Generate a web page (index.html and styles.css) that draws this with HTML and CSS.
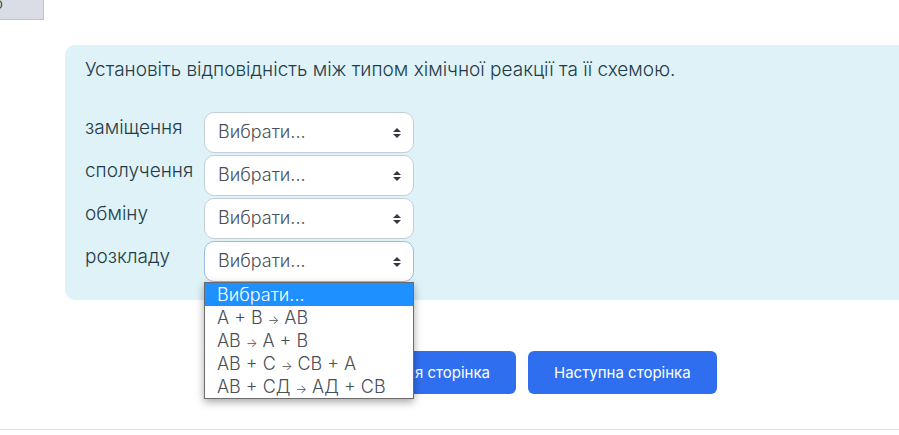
FILE: index.html
```html
<!DOCTYPE html>
<html lang="uk">
<head>
<meta charset="utf-8">
<title>Тест</title>
<link rel="stylesheet" href="styles.css">
</head>
<body>
<header class="info"><span>о</span></header>
<main>
  <form class="quiz">
    <section class="question">
      <p class="prompt">Установіть відповідність між типом хімічної реакції та її схемою.</p>
      <div class="answers">
        <label for="a1">заміщення</label>
        <div class="field">
          <select id="a1"><option>Вибрати...</option></select>
          <svg class="caret" viewBox="0 0 8 10"><path d="M0 4 4 0 8 4ZM0 6h8L4 10Z"/></svg>
        </div>
        <label for="a2">сполучення</label>
        <div class="field">
          <select id="a2"><option>Вибрати...</option></select>
          <svg class="caret" viewBox="0 0 8 10"><path d="M0 4 4 0 8 4ZM0 6h8L4 10Z"/></svg>
        </div>
        <label for="a3">обміну</label>
        <div class="field">
          <select id="a3"><option>Вибрати...</option></select>
          <svg class="caret" viewBox="0 0 8 10"><path d="M0 4 4 0 8 4ZM0 6h8L4 10Z"/></svg>
        </div>
        <label for="a4">розкладу</label>
        <div class="field">
          <select id="a4" class="open"><option>Вибрати...</option></select>
          <svg class="caret" viewBox="0 0 8 10"><path d="M0 4 4 0 8 4ZM0 6h8L4 10Z"/></svg>
          <ul class="menu" role="listbox" aria-label="розкладу">
            <li role="option" aria-selected="true" class="active">Вибрати...</li>
            <li role="option">А + В <span class="arrow">→</span> АВ</li>
            <li role="option">АВ <span class="arrow">→</span> А + В</li>
            <li role="option">АВ + С <span class="arrow">→</span> СВ + А</li>
            <li role="option">АВ + СД <span class="arrow">→</span> АД + СВ</li>
          </ul>
        </div>
      </div>
    </section>
    <div class="actions">
      <button type="button">Попередня сторінка</button>
      <button type="submit">Наступна сторінка</button>
    </div>
  </form>
</main>
<footer></footer>
</body>
</html>
```
FILE: styles.css
```css
* { box-sizing: border-box; }

body {
  margin: 0;
  background: #fff;
  color: #1f3c48;
  font: 300 19px/27px Inter, "Open Sans", sans-serif;
  overflow-x: hidden;
}

.info {
  display: flex;
  justify-content: flex-end;
  width: 44px;
  height: 20px;
  padding-right: 40px;
  overflow: hidden;
  background: #dadce6;
  border: solid #bfc2cf;
  border-width: 0 1px 1px 0;
  color: #333;
  font-size: 16px;
  line-height: 6px;
}

.quiz { padding: 25px 0 0 65px; }

.question {
  padding: 11px 20px 18px;
  background: #def2f8;
  border-radius: 10px 0 0 10px;
}

.prompt { margin: 0 0 29px; }

.answers {
  display: grid;
  grid-template-columns: 119px 210px;
  row-gap: 2px;
}

.answers label { padding-top: 2px; }

.field {
  position: relative;
  font-size: 18px;
}

select {
  display: block;
  width: 100%;
  height: 41px;
  padding: 0 28px 2px 13px;
  appearance: none;
  background: #fff;
  border: 1px solid #c3cfd8;
  border-radius: 10px;
  color: #495057;
  font: inherit;
}

select.open { border-color: #9dbbe8; }

.caret {
  position: absolute;
  top: 16px;
  right: 13px;
  width: 8px;
  height: 10px;
  fill: #343a40;
  pointer-events: none;
}

.menu {
  position: absolute;
  z-index: 1;
  top: 100%;
  left: 0;
  width: 100%;
  margin: 0;
  padding: 0;
  list-style: none;
  background: #fff;
  border: 1px solid #6c6c6c;
  box-shadow: 0 3px 8px rgba(0, 0, 0, .35);
  color: #495057;
  line-height: 23px;
}

.menu li {
  height: 23px;
  padding-left: 12px;
  white-space: nowrap;
}

.menu .active { background: #1e90ff; color: #fff; }

.arrow {
  font-size: 12px;
  line-height: 12px;
}

.actions {
  display: flex;
  gap: 12px;
  padding: 51px 0 35px 250px;
}

button {
  height: 43px;
  padding: 0 26px;
  background: #2f6fef;
  border: 0;
  border-radius: 6px;
  color: #fff;
  font: 400 15px/22px Inter, "Open Sans", sans-serif;
  white-space: nowrap;
}

footer { border-top: 1px solid #dee2e6; }
```
